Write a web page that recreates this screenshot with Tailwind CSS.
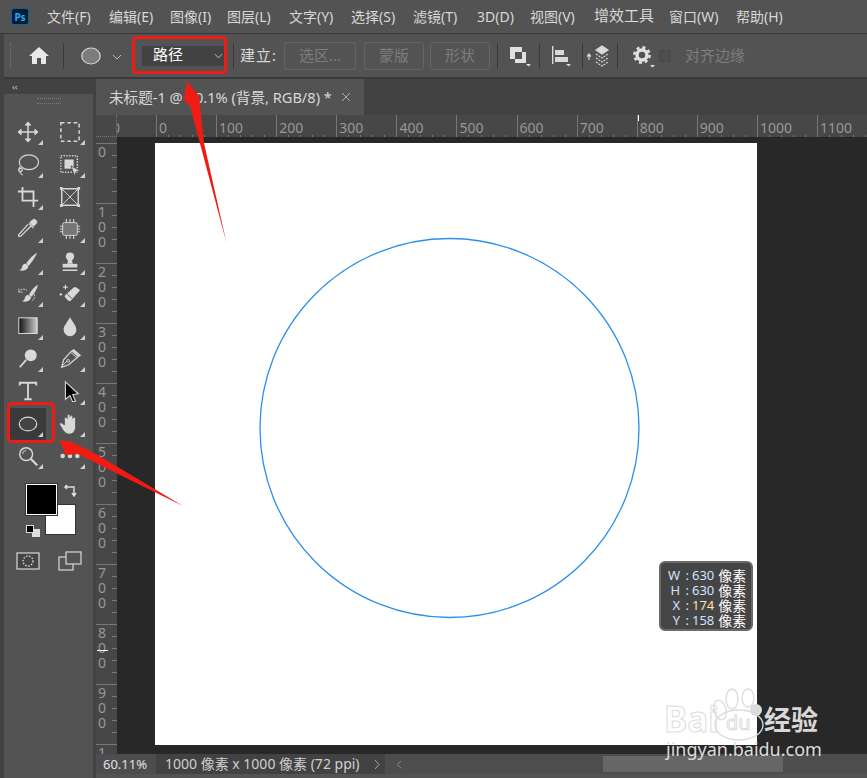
<!DOCTYPE html>
<html lang="zh">
<head>
<meta charset="UTF-8">
<title>Photoshop</title>
<script src="https://cdn.jsdelivr.net/npm/@tailwindcss/browser@4"></script>
</head>
<body class="bg-[#424242]">
<div class="relative w-[867px] h-[778px] overflow-hidden flex flex-col bg-[#424242] text-[#d8d8d8] font-['Noto_Sans','Noto_Sans_CJK_SC',sans-serif]">

  <!-- menu bar -->
  <header class="h-[34px] shrink-0 bg-[#535353] border-b border-[#3a3a3a] flex items-center text-[14px] leading-none">
    <div class="ml-[11px] w-[18px] h-[17px] rounded-[3px] bg-[#001e36] border border-[#1b5e8c] flex items-center justify-center text-[#31a8ff] text-[10px] font-bold">Ps</div>
    <nav class="ml-[18px] flex whitespace-nowrap">
      <span class="w-[62px]">文件(F)</span><span class="w-[61px]">编辑(E)</span><span class="w-[57px]">图像(I)</span><span class="w-[62px]">图层(L)</span><span class="w-[62px]">文字(Y)</span><span class="w-[62px]">选择(S)</span><span class="w-[64px]">滤镜(T)</span><span class="w-[53px]">3D(D)</span><span class="w-[64px]">视图(V)</span><span class="w-[75px] -mt-[2px] text-[15px]">增效工具</span><span class="w-[67px]">窗口(W)</span><span>帮助(H)</span>
    </nav>
  </header>

  <!-- options bar -->
  <div class="h-[45px] shrink-0 ml-[4px] bg-[#535353] border-b-2 border-[#3a3a3a] flex items-center text-[15px] leading-none">
    <div class="w-[3px] h-[26px] ml-[6px] border-l border-dotted border-[#777]"></div>
    <svg class="ml-[15px] w-[22px] h-[20px]" viewBox="0 0 22 20" fill="#e8e8e8"><path d="M11 1 L21 10 H18 V18 H13 V12 H9 V18 H4 V10 H1 Z"/></svg>
    <div class="ml-[13px] w-px h-[26px] bg-[#3a3a3a]"></div>
    <svg class="ml-[17px] w-[20px] h-[18px]" viewBox="0 0 20 18"><ellipse cx="10" cy="9" rx="9.2" ry="8" fill="#7c7c7c" stroke="#d8d8d8" stroke-width="1.2"/></svg>
    <svg class="ml-[11px] mt-[3px] w-[10px] h-[6px]" viewBox="0 0 10 6" fill="none" stroke="#bbb"><path d="M1 1 L5 5 L9 1"/></svg>
    <div class="ml-[20px] w-[83px] h-[20px] bg-[#424242] rounded-[2px] flex items-center justify-between pl-[11px] pr-[2px] text-white">
      <span class="-mt-[3px]">路径</span>
      <svg class="w-[9px] h-[6px]" viewBox="0 0 10 6" fill="none" stroke="#ccc"><path d="M1 1 L5 5 L9 1"/></svg>
    </div>
    <div class="ml-[8px] w-px h-[26px] bg-[#3a3a3a]"></div>
    <span class="ml-[6px] w-[40px] tracking-[1px]">建立:</span>
    <div class="ml-[4px] w-[72px] h-[28px] rounded-[3px] border border-[#646464] flex items-center justify-center text-[#7d7d7d]">选区...</div>
    <div class="ml-[8px] w-[60px] h-[28px] rounded-[3px] border border-[#646464] flex items-center justify-center text-[#7d7d7d]">蒙版</div>
    <div class="ml-[6px] w-[60px] h-[28px] rounded-[3px] border border-[#646464] flex items-center justify-center text-[#7d7d7d]">形状</div>
    <div class="ml-[7px] w-px h-[26px] bg-[#3a3a3a]"></div>
    <svg class="ml-[11px] w-[22px] h-[22px]" viewBox="0 0 22 22"><rect x="1" y="2" width="12" height="12" fill="#e0e0e0"/><rect x="6" y="7" width="11" height="11" fill="#e0e0e0"/><rect x="6" y="7" width="7" height="7" fill="#535353"/><path d="M17 19h5l-2.5 2.5z" fill="#e0e0e0"/></svg>
    <div class="ml-[8px] w-px h-[26px] bg-[#3a3a3a]"></div>
    <svg class="ml-[11px] w-[24px] h-[22px]" viewBox="0 0 24 22" fill="#d8d8d8"><rect x="1" y="1" width="1.4" height="18"/><rect x="4" y="5" width="9" height="5"/><rect x="4" y="12" width="13" height="5"/><path d="M15 19h5l-2.5 2.5z"/></svg>
    <div class="ml-[7px] w-px h-[26px] bg-[#3a3a3a]"></div>
    <svg class="ml-[3px] w-[24px] h-[24px]" viewBox="0 0 24 24" fill="none" stroke="#d8d8d8" stroke-width="1.2"><path d="M3 16V11M1 12.5 3 10l2 2.500" fill="#d8d8d8"/><path d="M16 2l6 4-6 4-6-4z" fill="#d8d8d8"/><path d="M10 10l6 4 6-4M10 14l6 4 6-4M10 18l6 4 6-4" stroke-dasharray="2 1"/></svg>
    <div class="ml-[7px] w-px h-[26px] bg-[#3a3a3a]"></div>
    <svg class="ml-[15px] w-[24px] h-[24px]" viewBox="0 0 24 24"><circle cx="9" cy="11" r="5" fill="none" stroke="#e0e0e0" stroke-width="3.400"/><circle cx="9" cy="11" r="7.600" fill="none" stroke="#e0e0e0" stroke-width="2.600" stroke-dasharray="3 3"/><path d="M17 21h5l-2.500 2.500z" fill="#e0e0e0"/></svg>
    <div class="ml-[2px] w-[12px] h-[12px] rounded-[2px] border border-[#474747] bg-[#4e4e4e]"></div>
    <span class="ml-[14px] text-[#7d7d7d]">对齐边缘</span>
  </div>

  <div class="flex-1 flex min-h-0">
    <!-- tools -->
    <aside class="ml-[4px] w-[89px] bg-[#535353] flex flex-col">
      <div class="h-[15px] bg-[#424242] flex items-center pl-[8px] text-[9px] leading-none text-[#ccc]">‹‹</div>
      <div class="h-[6px] mt-[4px] mx-auto w-[24px] border-y border-dotted border-[#7a7a7a]"></div>
      <div class="mt-[12px] ml-[3px] grid grid-cols-[42px_42px] auto-rows-[32.4px]">
        <script>
          const corner = '<i class="absolute right-[3px] bottom-[3px] w-0 h-0 border-l-[5px] border-l-transparent border-b-[5px] border-b-[#cfcfcf]"></i>';
          const icons = [
            '<path d="M12 2v20M2 12h20" stroke-width="1.600"/><path d="M12 1l3 3.500H9zM12 23l3-3.500H9zM1 12l3.500-3v6zM23 12l-3.500-3v6z" fill="#d8d8d8"/>',
            '<rect x="2" y="2" width="20" height="20" stroke-dasharray="4 3" stroke-width="1.600"/>',
            '<ellipse cx="13" cy="9" rx="10.500" ry="8" stroke-width="1.300"/><path d="M4 14c-3 2-3 5 0 5s2-4-1-3 1 5 3 7" stroke-width="1.300"/>',
            '<rect x="2" y="2" width="18" height="18" stroke-dasharray="1.500 1.500" stroke-width="1.600"/><rect x="6" y="6" width="10" height="10" fill="#d8d8d8" stroke="none"/><path d="M13 13l10 5-4.500 1.500-1.500 4.500z" fill="#d8d8d8" stroke="#535353"/>',
            '<path d="M1 6h5M6 1v15h15M6 6h12v12M18 18v5M20 16h3" stroke-width="2"/>',
            '<rect x="3" y="3" width="18" height="18" stroke-width="1.600"/><path d="M3 3l18 18M21 3L3 21"/><path d="M1 1h3v3H1zM20 1h3v3h-3zM1 20h3v3H1zM20 20h3v3h-3z" fill="#d8d8d8" stroke="none"/>',
            '<path d="M20 2c2 1 2 3 1 4l-3 3-4-4 3-3c1-.800 2-.800 3 0z" fill="#d8d8d8"/><path d="M13 6l5 5M15 9L5 19c-2 2-4 1-3-1L12 7" stroke-width="1.400"/>',
            '<rect x="4" y="5" width="16" height="14" rx="2" fill="#777"/><path d="M8 1v4M12 1v4M16 1v4M8 19v4M12 19v4M16 19v4M1 9h3M1 12h3M1 15h3M20 9h3M20 12h3M20 15h3" stroke-width="1.200"/>',
            '<path d="M22 2C18 4 12 10 10 14l3 2C16 12 20 7 22 2z" fill="#d8d8d8" stroke="none"/><path d="M9 14c-3 0-3 3-4 5-1 1-2 2-3 2 3 1 8 1 10-3 1-2 0-3-3-4z" fill="#d8d8d8" stroke="none"/>',
            '<circle cx="12" cy="6" r="4.500" fill="#d8d8d8" stroke="none"/><path d="M10 9h4l1 5H9z" fill="#d8d8d8" stroke="none"/><path d="M4 14h16v4H4z" fill="#d8d8d8" stroke="none"/><path d="M4 21h16" stroke-width="1.600"/>',
            '<path d="M23 2c-4 2-8 7-10 11l3 2c3-4 6-8 7-13z" fill="#d8d8d8" stroke="none"/><path d="M12 13c-3 0-3 3-4 5-1 1-2 2-3 2 3 1 8 1 10-3 1-2 0-3-3-4z" fill="#d8d8d8" stroke="none"/><path d="M2 10c2-4 6-4 9-2M2 6v4h4M19 12c1 4-1 6-3 8" stroke-dasharray="2 1"/>',
            '<path d="M22 9l-9 10c-1 1-2 1-3 0l-3-3c-1-1-1-2 0-3l9-8c1-1 2-1 3 0l3 2c1 1 1 1 0 2z" fill="#d8d8d8" stroke="none"/><path d="M8 11l6 6" stroke="#535353"/><path d="M7 2v5M4.500 4.500h5M2 11v3M.5 12.500h3" stroke-width="1.200"/>',
            '<rect x="2" y="2" width="20" height="17" fill="url(#grad)" stroke="#e8e8e8" stroke-width="1"/>',
            '<path d="M12 1c2 5 7 9 7 14a7 7 0 0 1-14 0c0-5 5-9 7-14z" fill="#d8d8d8" stroke="none"/>',
            '<circle cx="15" cy="8" r="6.500" fill="#d8d8d8" stroke="none"/><path d="M10 13L3 21" stroke-width="2"/>',
            '<path d="M16 2l7 6-3 2-9 8-8 3 2-8 8-9z" stroke-width="1.400"/><path d="M13 5l7 6M3 20l6-6" /><circle cx="10" cy="14" r="1.500"/><path d="M16 2l7 6-2 2-7-6z" fill="#d8d8d8" stroke="none"/>',
            '<path d="M3 6V3h18v3M12 3v18M8 21h8" stroke-width="2"/>',
            '<path d="M7 2l14 13-6 1 3 7-3 1-3-7-5 4z" fill="#000" stroke="#d8d8d8" stroke-width="1.200"/>',
            '<ellipse cx="12" cy="12" rx="9.500" ry="7.500" stroke-width="1.300" fill="#444"/>',
            '<path d="M6 13V6a1.500 1.500 0 0 1 3 0V3a1.500 1.500 0 0 1 3 0v1a1.500 1.500 0 0 1 3 0v2a1.500 1.500 0 0 1 3 0v9c0 5-3 8-7 8-3 0-5-2-7-5l-3-5c-1-2 1-3 2-2z" fill="#d8d8d8" stroke="#535353" stroke-width=".8"/>',
            '<circle cx="10" cy="10" r="7" stroke-width="1.600"/><path d="M15 15l7 7" stroke-width="2.400"/><path d="M6 10a4 4 0 0 1 4-4" stroke-width="1"/>',
            '<circle cx="4" cy="12" r="2.500" fill="#d8d8d8" stroke="none"/><circle cx="12" cy="12" r="2.500" fill="#d8d8d8" stroke="none"/><circle cx="20" cy="12" r="2.500" fill="#d8d8d8" stroke="none"/>'
          ];
          icons.forEach((svg, i) => {
            const bg = i === 18 ? 'bg-[#3a3a3a]' : '';
            document.write(`<div class="relative flex items-center justify-center ml-[3px] mr-[3px] ${bg}">
              <svg class="w-[22px] h-[22px]" viewBox="0 0 24 24" fill="none" stroke="#d8d8d8"><defs><linearGradient id="grad"><stop offset="0" stop-color="#111"/><stop offset="1" stop-color="#ccc"/></linearGradient></defs>${svg}</svg>
              ${i === 16 || i === 5 ? '' : corner}
            </div>`);
          });
        </script>
      </div>
      <!-- colours -->
      <div class="relative mt-[12px] ml-[22px] w-[56px] h-[54px]">
        <div class="absolute left-[19px] top-[20px] w-[31px] h-[31px] bg-white border border-[#333]"></div>
        <div class="absolute left-0 top-0 w-[31px] h-[31px] bg-black border border-white outline outline-[#333]"></div>
        <svg class="absolute left-[38px] top-0 w-[14px] h-[13px]" viewBox="0 0 14 13" fill="none" stroke="#e0e0e0" stroke-width="1.400"><path d="M1 3h9v8M3 1L1 3l2 2M8 9l2 3 2-3"/></svg>
        <div class="absolute left-[6px] top-[45px] w-[8px] h-[8px] bg-[#ddd]"></div>
        <div class="absolute left-[0px] top-[41px] w-[8px] h-[8px] bg-black border border-[#ddd]"></div>
      </div>
      <div class="mt-[13px] ml-[12px] flex items-center gap-[18px]">
        <svg class="w-[24px] h-[18px]" viewBox="0 0 24 18" fill="none" stroke="#d8d8d8"><rect x="1" y="1" width="22" height="16" fill="#444" stroke-width="1.200"/><circle cx="12" cy="9" r="5" stroke-dasharray="1.500 1.500" stroke-width="1.400"/></svg>
        <svg class="w-[24px] h-[20px]" viewBox="0 0 24 20" fill="none" stroke="#d8d8d8" stroke-width="1.200"><rect x="1" y="6" width="14" height="13" fill="#535353"/><rect x="8" y="1" width="15" height="12" fill="#535353"/></svg>
      </div>
    </aside>

    <!-- document column -->
    <div class="ml-[3px] flex-1 min-w-0 flex flex-col">
      <div class="h-[36px] shrink-0 flex bg-[#424242]">
        <div class="w-[268px] bg-[#535353] flex items-center pl-[13px] text-[14.600px] leading-none text-[#d8d8d8] whitespace-nowrap">
          <span>未标题-1 @ 60.1% (背景, RGB/8) *</span>
          <svg class="ml-[9px] w-[10px] h-[10px]" viewBox="0 0 10 10" stroke="#aaa"><path d="M1 1l8 8M9 1l-8 8"/></svg>
        </div>
      </div>

      <!-- horizontal ruler -->
      <div class="relative h-[22px] shrink-0 flex overflow-hidden bg-[#474747] text-[14px] leading-none text-[#989898]">
        <div class="w-[21px] shrink-0 border-r border-b border-dotted border-[#777]"></div>
        <div class="w-[39px] shrink-0 flex flex-col justify-between overflow-hidden"><span class="-ml-[5px] mt-[6px]">0</span></div>
        <script>
          for (let i = 0; i <= 11; i++) {
            document.write(`<div class="w-[60.1px] shrink-0 flex flex-col justify-between border-l border-[#777]">
              <span class="pl-[2px] pt-[6px]">${i * 100}</span>
              <div class="h-[3px] flex"><i class="flex-1 border-r border-[#777]"></i><i class="flex-1 border-r border-[#777]"></i><i class="flex-1 border-r border-[#777]"></i><i class="flex-1 border-r border-[#777]"></i><i class="flex-1"></i></div>
            </div>`);
          }
        </script>
        <i class="absolute left-[542px] top-0 w-px h-[6px] bg-white"></i>
      </div>

      <div class="flex-1 min-h-0 flex">
        <!-- vertical ruler -->
        <div class="relative w-[21px] shrink-0 flex flex-col overflow-hidden bg-[#474747] text-[14px] leading-[15px] text-[#989898]">
          <div class="h-[6px] shrink-0"></div>
          <script>
            for (let i = 0; i <= 10; i++) {
              const digits = String(i * 100).split('').map(d => `<span class="block">${d}</span>`).join('');
              document.write(`<div class="h-[60.1px] shrink-0 flex justify-between border-t border-[#777]">
                <div class="pl-[2px]">${digits}</div>
                <div class="w-[5px] flex flex-col"><i class="flex-1 border-b border-[#777]"></i><i class="flex-1 border-b border-[#777]"></i><i class="flex-1 border-b border-[#777]"></i><i class="flex-1 border-b border-[#777]"></i><i class="flex-1"></i></div>
              </div>`);
            }
          </script>
          <i class="absolute left-[1px] top-[513px] w-[11px] h-px bg-white"></i>
        </div>
        <!-- canvas -->
        <main class="flex-1 min-w-0 bg-[#282828] overflow-hidden pl-[38px] pt-[6px]">
          <div class="w-[602px] h-[602px] bg-white">
            <svg class="w-full h-full" viewBox="0 0 602 602"><circle cx="294.500" cy="285" r="189.500" fill="none" stroke="#2b8fee" stroke-width="1.300"/></svg>
          </div>
        </main>
      </div>

      <!-- status bar -->
      <div class="h-[24px] shrink-0 bg-[#4d4d4d] border-b-4 border-[#535353] flex items-stretch leading-none whitespace-nowrap">
        <span class="w-[60px] self-center pl-[7px] text-[13px] text-[#e0e0e0]">60.11%</span>
        <div class="w-[229px] bg-[#424242] flex items-center pl-[9px] text-[14px] text-[#d0d0d0]">
          <span>1000 像素 x 1000 像素 (72 ppi)</span>
          <svg class="ml-auto mr-[5px] w-[6px] h-[11px]" viewBox="0 0 6 11" fill="none" stroke="#aaa"><path d="M1 1l4 4.500-4 4.500"/></svg>
        </div>
        <svg class="ml-[11px] self-center w-[6px] h-[9px]" viewBox="0 0 6 9" fill="none" stroke="#888"><path d="M5 1L1 4.500 5 8"/></svg>
        <div class="ml-[201px] my-[2px] w-[180px] bg-[#666]"></div>
      </div>
    </div>
  </div>

  <!-- size tooltip -->
  <div class="absolute left-[659px] top-[561px] w-[94px] h-[70px] rounded-[6px] bg-[#454545] border-2 border-[#6a6a6a] pt-[5px] text-[13px] leading-[15px] text-white">
    <div class="flex"><span class="w-[29px] text-right tracking-[1px] text-[#cfe4ff]">W :</span><span class="ml-[2px] text-[#cfe4ff]">630</span><span class="ml-[4px] text-[14px]">像素</span></div>
    <div class="flex"><span class="w-[29px] text-right tracking-[1px] text-[#cfe4ff]">H :</span><span class="ml-[2px] text-[#cfe4ff]">630</span><span class="ml-[4px] text-[14px]">像素</span></div>
    <div class="flex"><span class="w-[29px] text-right tracking-[1px] text-[#cfe4ff]">X :</span><span class="ml-[2px] text-[#ffe0b0]">174</span><span class="ml-[4px] text-[14px]">像素</span></div>
    <div class="flex"><span class="w-[29px] text-right tracking-[1px] text-[#cfe4ff]">Y :</span><span class="ml-[2px] text-[#cfe4ff]">158</span><span class="ml-[4px] text-[14px]">像素</span></div>
  </div>

  <!-- watermark -->
  <div class="absolute left-[664px] top-[684px] w-[170px] h-[84px]">
    <svg class="absolute left-[42px] top-0 w-[70px] h-[62px]" viewBox="0 0 70 62" fill="none" stroke="#dcdcdc" stroke-width="1.300"><ellipse cx="14" cy="26" rx="6" ry="10" transform="rotate(-15 14 26)"/><ellipse cx="26" cy="15" rx="6" ry="10"/><ellipse cx="42" cy="14" rx="6" ry="9"/><ellipse cx="33" cy="41" rx="24" ry="15"/><circle cx="50" cy="26" r="6" fill="#dcdcdc" stroke="none"/></svg>
    <span class="absolute left-0 top-[17px] text-[35px] leading-[36px] font-bold text-transparent [-webkit-text-stroke:1px_#dcdcdc]">Bai</span>
    <span class="absolute left-[62px] top-[28px] text-[20px] leading-[22px] text-transparent [-webkit-text-stroke:1px_#dcdcdc]">du</span>
    <span class="absolute left-[100px] top-[20px] text-[27px] leading-[32px] font-bold text-[#d8d8d8]">经验</span>
    <span class="absolute left-[2px] top-[53px] text-[18px] leading-[24px] text-[#dcdcdc] whitespace-nowrap">jingyan.baidu.com</span>
  </div>

  <!-- red annotations -->
  <div class="absolute left-[132px] top-[36px] w-[95px] h-[38px] rounded-[4px] border-[3px] border-[#f01c14]"></div>
  <div class="absolute left-[7px] top-[402px] w-[48px] h-[41px] rounded-[5px] border-[3px] border-[#f01c14]"></div>
  <svg class="absolute left-0 top-0 w-[867px] h-[778px] pointer-events-none" viewBox="0 0 867 778" fill="#f01c14">
    <path d="M187 81 L199 96 L204 143 L226.500 243 L190 106 L184 100 Z"/>
    <path d="M59 440 L72 442 L96 454 L183 506 L120 475 L78 454 L66 455 Z"/>
  </svg>
</div>
</body>
</html>
